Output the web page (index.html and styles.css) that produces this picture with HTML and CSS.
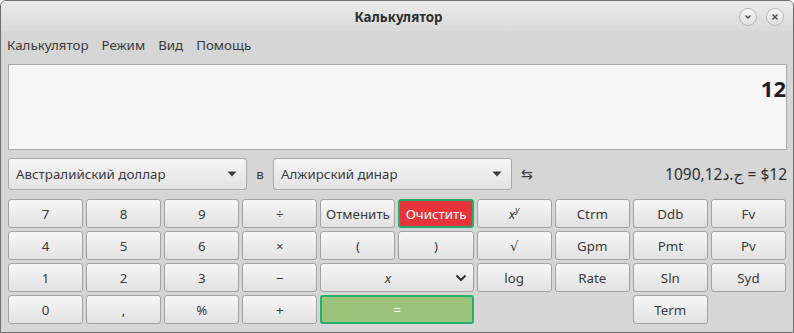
FILE: index.html
```html
<!DOCTYPE html>
<html lang="ru">
<head>
<meta charset="utf-8">
<title>Калькулятор</title>
<link rel="stylesheet" href="styles.css">
</head>
<body>
<div class="window">
  <header class="titlebar">
    <div class="spacer"></div>
    <div class="title">Калькулятор</div>
    <div class="wm-buttons">
      <span class="wm-btn"><svg width="8" height="6" viewBox="0 0 8 6"><polyline points="1.5,1.5 4,4 6.5,1.5" fill="none" stroke="#4a4a4a" stroke-width="1.4"/></svg></span>
      <span class="wm-btn"><svg width="8" height="8" viewBox="0 0 8 8"><path d="M1.5 1.5 L6.5 6.5 M6.5 1.5 L1.5 6.5" stroke="#4a4a4a" stroke-width="1.4"/></svg></span>
    </div>
  </header>
  <nav class="menubar">
    <span class="menu-item">Калькулятор</span>
    <span class="menu-item">Режим</span>
    <span class="menu-item">Вид</span>
    <span class="menu-item">Помощь</span>
  </nav>
  <main class="content">
    <div class="display"><span class="value">12</span></div>
    <div class="convert-row">
      <div class="combo"><span>Австралийский доллар</span><svg width="10" height="6" viewBox="0 0 10 6"><polygon points="0.5,0.5 9.5,0.5 5,5.5" fill="#3a3a3a"/></svg></div>
      <span class="in">в</span>
      <div class="combo"><span>Алжирский динар</span><svg width="10" height="6" viewBox="0 0 10 6"><polygon points="0.5,0.5 9.5,0.5 5,5.5" fill="#3a3a3a"/></svg></div>
      <span class="swap">⇆</span>
      <span class="result">1090,12<bdi dir="rtl">ج.د</bdi> = $12</span>
    </div>
    <div class="keys">
      <button class="key">7</button>
      <button class="key">8</button>
      <button class="key">9</button>
      <button class="key">÷</button>
      <button class="key">Отменить</button>
      <button class="key key-clear">Очистить</button>
      <button class="key"><i>x</i><i class="sup">y</i></button>
      <button class="key">Ctrm</button>
      <button class="key">Ddb</button>
      <button class="key">Fv</button>

      <button class="key">4</button>
      <button class="key">5</button>
      <button class="key">6</button>
      <button class="key">×</button>
      <button class="key">(</button>
      <button class="key">)</button>
      <button class="key">√</button>
      <button class="key">Gpm</button>
      <button class="key">Pmt</button>
      <button class="key">Pv</button>

      <button class="key">1</button>
      <button class="key">2</button>
      <button class="key">3</button>
      <button class="key">−</button>
      <button class="key key-wide key-var"><span class="var-label"><i>x</i></span><svg width="12" height="8" viewBox="0 0 12 8"><polyline points="1.5,1.5 6,6 10.5,1.5" fill="none" stroke="#2e2e2e" stroke-width="2"/></svg></button>
      <button class="key">log</button>
      <button class="key">Rate</button>
      <button class="key">Sln</button>
      <button class="key">Syd</button>

      <button class="key">0</button>
      <button class="key">,</button>
      <button class="key">%</button>
      <button class="key">+</button>
      <button class="key key-wide key-equals">=</button>
      <button class="key key-term">Term</button>
    </div>
  </main>
</div>
</body>
</html>
```

FILE: styles.css
```css
* { box-sizing: border-box; }

html, body {
  margin: 0;
  padding: 0;
  background: #ffffff;
}

body {
  font-family: "Noto Sans", "DejaVu Sans", sans-serif;
  font-size: 13.33px;
  color: #3a3a3a;
}

.window {
  width: 794px;
  height: 333px;
  border: 1px solid #6e6e6e;
  border-radius: 6px 6px 0 0;
  background: #d6d6d6;
  overflow: hidden;
}

.titlebar {
  height: 30px;
  display: grid;
  grid-template-columns: 1fr auto 1fr;
  align-items: center;
  background: linear-gradient(#ececec, #d9d9d9);
}

.title {
  font-weight: bold;
  color: #2e2e2e;
  line-height: 18px;
  padding-top: 2px;
  padding-left: 3px;
}

.wm-buttons {
  justify-self: end;
  display: flex;
  gap: 9px;
  padding-right: 9px;
  padding-top: 2px;
}

.wm-btn {
  width: 18px;
  height: 18px;
  border-radius: 50%;
  border: 1px solid #b9b9b9;
  background: linear-gradient(#f7f7f7, #dedede);
  display: flex;
  align-items: center;
  justify-content: center;
}

.menubar {
  height: 26px;
  padding: 5px 0 0 0;
  display: flex;
  line-height: 18px;
}

.menu-item {
  padding: 0 6px;
  margin-right: 1px;
  color: #3a3a3a;
}

.content {
  padding: 7px 6px 0 7px;
}

.display {
  height: 86px;
  border: 1px solid #a8a8a8;
  background: #f7f7f7;
  text-align: right;
  padding: 8px 0 0 0;
}

.value {
  font-size: 22px;
  font-weight: bold;
  line-height: 30px;
  color: #1e1e1e;
}

.convert-row {
  margin-top: 8px;
  height: 32px;
  display: flex;
  align-items: center;
}

.combo {
  width: 239px;
  height: 32px;
  border: 1px solid #a9a9a9;
  border-radius: 3px;
  background: linear-gradient(#f5f5f5, #e3e3e3);
  display: flex;
  align-items: center;
  justify-content: space-between;
  padding: 0 9px 0 7px;
}

.in {
  width: 26px;
  text-align: center;
}

.swap {
  margin-left: 9px;
  font-family: "DejaVu Sans", sans-serif;
  font-size: 14px;
  color: #3a3a3a;
}

.result {
  flex: 1;
  text-align: right;
  font-size: 15.5px;
  color: #2e2e2e;
}

.keys {
  margin-top: 9px;
  display: grid;
  grid-template-columns: repeat(10, 1fr);
  grid-template-rows: repeat(4, 29px);
  gap: 3px;
  width: 778px;
}

.key {
  font-family: "Noto Sans", "DejaVu Sans", sans-serif;
  font-size: 13.33px;
  color: #3a3a3a;
  border: 1px solid #a3a3a3;
  border-radius: 3px;
  background: linear-gradient(#f6f6f6, #e2e2e2);
  padding: 0;
  margin: 0;
  display: flex;
  align-items: center;
  justify-content: center;
  line-height: 18px;
}

.sup {
  font-size: 9px;
  align-self: flex-start;
  margin-top: 5px;
  line-height: 10px;
}

.key-clear {
  background: #e6343a;
  color: #ffffff;
  border: 2px solid #21ad6b;
}

.key-wide {
  grid-column: span 2;
}

.key-var {
  justify-content: space-between;
  padding: 0 6px 0 0;
}

.var-label {
  flex: 1;
  text-align: center;
}

.key-equals {
  background: #9cc47a;
  color: #ffffff;
  border: 2px solid #22b06e;
}

.key-term {
  grid-column: 9;
}
```
